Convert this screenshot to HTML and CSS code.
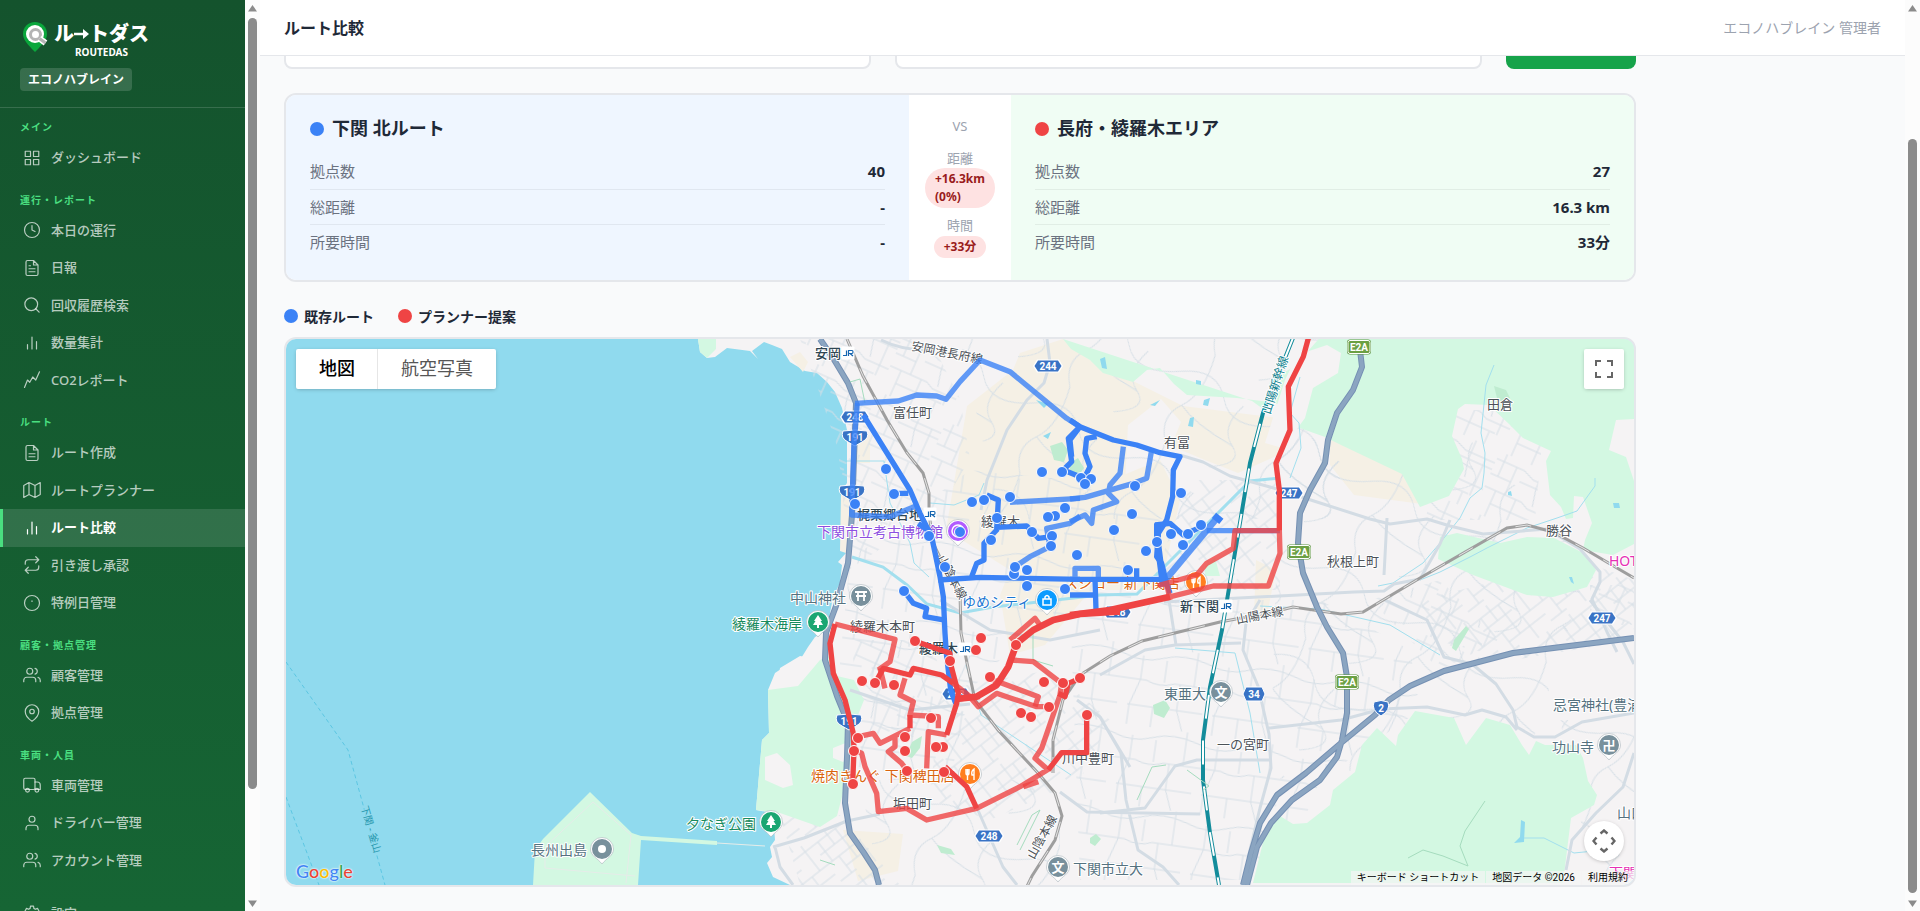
FILE: index.html
```html
<!DOCTYPE html>
<html lang="ja">
<head>
<meta charset="utf-8">
<title>ルート比較 | ルートダス</title>
<link rel="stylesheet" href="styles.css">
</head>
<body>
<div class="app">
  <aside class="sidebar">
    <div class="sidebar-scroll">
      <div class="brand">
        <div class="logo">
          <svg class="logo-pin" viewBox="0 0 26 32" aria-hidden="true">
            <path fill="#0aa73c" d="M13 1C6 1 1 6.200 1 13c0 5.500 4 10 12 18 8-8 12-12.500 12-18C25 6.200 20 1 13 1z"/>
            <circle cx="13" cy="13" r="9" fill="#fff"/>
            <circle cx="13.500" cy="13.500" r="5" fill="none" stroke="#b4b4b4" stroke-width="3"/>
            <path d="M17.500 17.500l6 4.500" stroke="#fff" stroke-width="6"/>
            <path d="M17.500 17.500l6 4.500" stroke="#b4b4b4" stroke-width="3"/>
          </svg>
          <div class="logo-text"><span class="logo-ja">ル<svg class="logo-arrow" viewBox="0 0 15 20" aria-hidden="true"><path d="M0 10h11" stroke="#fff" stroke-width="2.500"/><path d="M9 5l6 5-6 5z" fill="#fff"/></svg>トダス</span><span class="logo-en">ROUTEDAS</span></div>
        </div>
        <span class="tenant">エコノハブレイン</span>
      </div>
      <nav class="nav">
        <h2 class="nav-label nav-label-first">メイン</h2>
        <a class="nav-item" href="#"><svg class="icon" viewBox="0 0 24 24"><rect x="3" y="3" width="7" height="7"/><rect x="14" y="3" width="7" height="7"/><rect x="3" y="14" width="7" height="7"/><rect x="14" y="14" width="7" height="7"/></svg>ダッシュボード</a>
        <h2 class="nav-label">運行・レポート</h2>
        <a class="nav-item" href="#"><svg class="icon" viewBox="0 0 24 24"><circle cx="12" cy="12" r="10"/><path d="M12 6v6l4 2"/></svg>本日の運行</a>
        <a class="nav-item" href="#"><svg class="icon" viewBox="0 0 24 24"><path d="M14 2H6a2 2 0 0 0-2 2v16a2 2 0 0 0 2 2h12a2 2 0 0 0 2-2V8zM14 2v6h6M16 13H8M16 17H8M10 9H8"/></svg>日報</a>
        <a class="nav-item" href="#"><svg class="icon" viewBox="0 0 24 24"><circle cx="11" cy="11" r="8.500"/><path d="M21.500 21.500L17 17"/></svg>回収履歴検索</a>
        <a class="nav-item" href="#"><svg class="icon" viewBox="0 0 24 24"><path d="M18 20V10M12 20V4M6 20v-6"/></svg>数量集計</a>
        <a class="nav-item" href="#"><svg class="icon" viewBox="0 0 24 24"><path d="M2 22l4-10 3 3 4-7 4 4 5-11"/></svg>CO2レポート</a>
        <h2 class="nav-label">ルート</h2>
        <a class="nav-item" href="#"><svg class="icon" viewBox="0 0 24 24"><path d="M14 2H6a2 2 0 0 0-2 2v16a2 2 0 0 0 2 2h12a2 2 0 0 0 2-2V8zM14 2v6h6M16 13H8M16 17H8"/></svg>ルート作成</a>
        <a class="nav-item" href="#"><svg class="icon" viewBox="0 0 24 24"><path d="M1 6v16l7-4 8 4 7-4V2l-7 4-8-4zM8 2v16M16 6v16"/></svg>ルートプランナー</a>
        <a class="nav-item nav-item-active" href="#" aria-current="page"><svg class="icon" viewBox="0 0 24 24"><path d="M18 20V10M12 20V4M6 20v-6"/></svg>ルート比較</a>
        <a class="nav-item" href="#"><svg class="icon" viewBox="0 0 24 24"><path d="M17 1l4 4-4 4M3 11V9a4 4 0 0 1 4-4h14M7 23l-4-4 4-4M21 13v2a4 4 0 0 1-4 4H3"/></svg>引き渡し承認</a>
        <a class="nav-item" href="#"><svg class="icon" viewBox="0 0 24 24"><circle cx="12" cy="12" r="10"/><path d="M12 9v1"/></svg>特例日管理</a>
        <h2 class="nav-label">顧客・拠点管理</h2>
        <a class="nav-item" href="#"><svg class="icon" viewBox="0 0 24 24"><path d="M17 21v-2a4 4 0 0 0-4-4H5a4 4 0 0 0-4 4v2M23 21v-2a4 4 0 0 0-3-3.870M16 3.130a4 4 0 0 1 0 7.750"/><circle cx="9" cy="7" r="4"/></svg>顧客管理</a>
        <a class="nav-item" href="#"><svg class="icon" viewBox="0 0 24 24"><path d="M21 10c0 7-9 13-9 13s-9-6-9-13a9 9 0 0 1 18 0z"/><circle cx="12" cy="10" r="3"/></svg>拠点管理</a>
        <h2 class="nav-label">車両・人員</h2>
        <a class="nav-item" href="#"><svg class="icon" viewBox="0 0 24 24"><rect x="1" y="3" width="15" height="15" rx="2"/><path d="M16 8h3a4 4 0 0 1 4 4v6h-7"/><circle cx="6" cy="19" r="2.500"/><circle cx="18.500" cy="19" r="2.500"/></svg>車両管理</a>
        <a class="nav-item" href="#"><svg class="icon" viewBox="0 0 24 24"><path d="M20 21v-2a4 4 0 0 0-4-4H8a4 4 0 0 0-4 4v2"/><circle cx="12" cy="7" r="4"/></svg>ドライバー管理</a>
        <a class="nav-item" href="#"><svg class="icon" viewBox="0 0 24 24"><path d="M17 21v-2a4 4 0 0 0-4-4H5a4 4 0 0 0-4 4v2M23 21v-2a4 4 0 0 0-3-3.870M16 3.130a4 4 0 0 1 0 7.750"/><circle cx="9" cy="7" r="4"/></svg>アカウント管理</a>
        <a class="nav-item nav-item-last" href="#"><svg class="icon" viewBox="0 0 24 24"><circle cx="12" cy="12" r="3"/><path d="M9.500 4.500L10 1.500h4l.5 3 2 1.200 2.800-1.200 2 3.500-2.300 1.900v4.200l2.300 1.900-2 3.500-2.800-1.200-2 1.200-.5 3h-4l-.5-3-2-1.200-2.800 1.200-2-3.500L5 14.100V9.900L2.700 8l2-3.500 2.800 1.200z"/></svg>設定</a>
      </nav>
    </div>
    <div class="scrollbar" aria-hidden="true">
      <svg class="scroll-arrow" viewBox="0 0 9 7"><path d="M4.500 0L9 6.500H0z"/></svg>
      <div class="scroll-track scroll-track-side"><div class="scroll-thumb"></div></div>
      <svg class="scroll-arrow" viewBox="0 0 9 7"><path d="M4.500 7L0 .5h9z"/></svg>
    </div>
  </aside>

  <div class="main">
    <div class="main-column">
      <header class="topbar">
        <h1 class="page-title">ルート比較</h1>
        <span class="user">エコノハブレイン 管理者</span>
      </header>
      <main class="content">
        <form class="filters">
          <select class="route-select" aria-label="既存ルート"><option></option></select>
          <select class="route-select" aria-label="プランナー提案"><option></option></select>
          <button class="compare-button" type="button" aria-label="ルート比較"></button>
        </form>

        <section class="compare">
          <div class="panel panel-existing">
            <h2 class="panel-title"><span class="dot dot-blue"></span>下関 北ルート</h2>
            <dl class="stats">
              <div class="stat"><dt>拠点数</dt><dd>40</dd></div>
              <div class="stat"><dt>総距離</dt><dd>-</dd></div>
              <div class="stat"><dt>所要時間</dt><dd>-</dd></div>
            </dl>
          </div>
          <div class="versus">
            <div class="vs">VS</div>
            <div class="diff"><span class="diff-label">距離</span><span class="pill">+16.3km (0%)</span></div>
            <div class="diff"><span class="diff-label">時間</span><span class="pill">+33分</span></div>
          </div>
          <div class="panel panel-proposal">
            <h2 class="panel-title"><span class="dot dot-red"></span>長府・綾羅木エリア</h2>
            <dl class="stats">
              <div class="stat"><dt>拠点数</dt><dd>27</dd></div>
              <div class="stat"><dt>総距離</dt><dd>16.3 km</dd></div>
              <div class="stat"><dt>所要時間</dt><dd>33分</dd></div>
            </dl>
          </div>
        </section>

        <div class="legend">
          <span class="legend-item"><span class="dot dot-blue"></span>既存ルート</span>
          <span class="legend-item"><span class="dot dot-red"></span>プランナー提案</span>
        </div>

        <section class="map" aria-label="地図">
          <svg class="map-canvas" viewBox="286 339 1348 546" preserveAspectRatio="xMidYMid slice">
            <defs>
              <pattern id="st1" width="74" height="66" patternUnits="userSpaceOnUse" patternTransform="rotate(24)">
                <path class="street" d="M0 8h30l12 5h32M0 24h22M30 20h44M0 38h40l8 4h26M12 52h50M8 0v24M22 8v30M34 38v28M48 0v20l4 18M64 13v40M12 38v28M56 53v13"/>
              </pattern>
              <pattern id="st2" width="60" height="58" patternUnits="userSpaceOnUse" patternTransform="rotate(-38)">
                <path class="street" d="M0 7h60M0 19h36M0 31h60M14 43h46M0 52h20M6 7v24M18 0v19M28 7v36M40 31v27M50 0v31M14 31v21"/>
              </pattern>
              <pattern id="st3" width="86" height="80" patternUnits="userSpaceOnUse" patternTransform="rotate(8)">
                <path class="street" d="M0 10q20 8 40 0t46 0M0 34h26q14 6 28 0h32M10 60h50M20 10v24l-8 26v20M44 12v22M60 34v26l8 20M74 0v34M60 60h26M36 60v20"/>
              </pattern>
              <pattern id="st4" width="110" height="100" patternUnits="userSpaceOnUse" patternTransform="rotate(30)">
                <path class="street" d="M0 30q30-20 50 4t60-4M20 0q10 40-4 60t4 40M70 30q-10 30 10 40t-10 30M16 60q20 10 64 10"/>
              </pattern>
              <g id="hex"><path d="M-11-6.500h22l4 6.500-4 6.500h-22L-15 0z" fill="#fff"/><path d="M-10-5.500h20l3.500 5.500-3.500 5.500h-20L-13.500 0z" fill="#3973c5"/></g>
              <g id="nat"><path d="M-12-7Q0-9 12-7q3 7-5 11l-7 4-7-4Q-15 0-12-7z" fill="#3973c5" stroke="#fff" stroke-width="1"/></g>
              <g id="exp"><rect x="-12" y="-7.500" width="24" height="15" rx="3" fill="#5d9540"/><rect x="-11" y="-6.500" width="22" height="13" rx="2" fill="#6ba043" stroke="#fff" stroke-width="1"/></g>
              <g id="pin"><path d="M-11.500 0a11.500 11.500 0 1 1 23 0c0 7-7 9-11.500 15C-4.500 9-11.500 7-11.500 0z" fill="#fff" stroke="#a9b4ba" stroke-width=".6"/><circle r="10" fill="currentColor"/></g>
              <g id="tree"><use href="#pin"/><path d="M0-7l4 6H2.500L5 3H1v3h-2V3h-4l2.500-4H-4z" fill="#fff"/></g>
              <g id="food"><use href="#pin"/><path d="M-4-5v4q0 2 1.500 2T-1-1v-4M-2.500-5v11M4 6V-5Q1-3 2 1h2" fill="none" stroke="#fff" stroke-width="1.400"/></g>
              <g id="jr"><rect x="-6.500" y="-6.500" width="13" height="13" rx="1" fill="#fff"/><path d="M-5 2.500h3.500V-2.500M.5 3v-5.500h3.500q1 0 1 1.500t-1 1.500H2l3 2.500" fill="none" stroke="#1565b0" stroke-width="1.200"/></g>
              <circle id="b" r="5.500" fill="#3b82f6" stroke="#fff" stroke-width="1"/>
              <circle id="r" r="5.500" fill="#ef4444" stroke="#fff" stroke-width="1"/>
              <g id="rails">
                <path d="M847 339l16 37 24 44 20 33 16 20 6 20v20l4 30 13 27 14 23 1 40 6 30 8 37 23 30 40 43 17 20 7 23-7 24-23 36-14 29"/>
                <path d="M1053 773v-33l10-40 17-25 30-19 32-15 78-19 53-10 20-5 48 7 22-2 57-34 87-50 20-3 26 7 30 16 51 30"/>
              </g>
              <g id="highways">
                <path d="M820 339l13 19 15 25 8 20-1 27-3 85-4 48-12 43-10 27-1 27 12 36 11 27-1 34-2 46 5 30 14 20 11 17 4 15"/>
                <path d="M1360 350l2 17-9 23-16 23-9 27-3 23-15 27-10 23-2 30 5 30 14 34 10 20 16 26 4 24v36l-5 27-5 17-17 23-28 20-21 23-14 24-10 38M1634 638l-121 15-69 18-34 15-21 14-14 15-34 28-35 30-29 22-17 28-9 30-8 32"/>
              </g>
            </defs>

            <rect x="286" y="339" width="1348" height="546" fill="#90daee"/>
            <!-- coastline and island -->
            <path fill="#f5f3f4" d="M698 339l2 13 7 6 8-1 12-9 23 3 8 8-6-8 12-9 8 3 10 4 8 13 15 9 12 2 10 9 8 10 7 16 5 22v53l-5 7 1 27-2 26 5 10-8 9 4 3-2 18-7 14-3 16-3 17-12 7-7 10-8 13-13 5-12 8-7 17 1 43-7 7-6 70 17 3 2 27-5 7 2 10-5 6 6 14 17 8h844V339z"/>
            <path fill="#d3f8e2" d="M543 839l47-47 42 41 9 3 76 5v4l-76-5-3 45H533l2-35zM698 339h18v10l-9 9-7-6z"/>
            <path fill="none" stroke="#e6ece9" d="M545 847l48-45 38 33-5 48M545 868l90 8M545 850v18M717 843l48 3"/>
            <!-- farmland -->
            <g fill="#f5f0e5">
              <path d="M967 406l46-36 7-17 43-14 17 14 25 17 28 11 50 25 104 13-4 34-45 20-33-13-34-14 10-24-20-23-33 26-3 60-35 20 5 80-50 60-35 10-10-60 10-25-64-40z"/>
              <path d="M1070 497l90-37 20 40-20 90-90 0zM1330 438l40 4 32 30 20 32-68-9-24-30zM841 492l10 3 1 60-12-4zM843 830l60 4-5 37-40 10zM790 357l10-5 8 10-5 10zM852 435h18v28h-16zM1256 560l20 10-10 50-12-5z"/>
            </g>
            <!-- minor streets -->
            <path fill="url(#st1)" d="M800 339h130l30 60 10 60-30 50-90 60-12-120-20-60z"/>
            <path fill="url(#st4)" d="M960 339h380v180h-340z"/>
            <path fill="url(#st3)" d="M850 560l120-90 100 10 90 40-30 80-100 30-60 60-20 90-110 0 0-120zM1070 600h250l90 50 10 60-100 70-40 100h-200z"/>
            <path fill="url(#st2)" d="M940 690l110-20 60 50-30 60-90 40-60-20zM1190 480h90v110h-130zM780 815h60l60 70H800zM1420 600l160-40 54 20v60l-120 20-80-20z"/>
            <path fill="url(#st1)" d="M1455 410h90l-10 110h-110zM1370 600l70-20 60 60-60 30zM1610 420h24v34h-24zM1590 585h44v40h-44z"/>
            <path fill="url(#st4)" d="M1280 440l180-10 130 130-60 190-260 30zM860 780h200v105H880zM1560 720h74v165h-40z"/>
            <path fill="url(#st1)" d="M850 640h80l20 60-60 60-30-60z"/>
            <!-- hills and parks -->
            <g fill="#d3f8e2">
              <path d="M1063 339l8 10 19 11 13 13 30 9 14-12 13-2 14 16 13 11 50 3 33 4 17 5 7-40 30-34h310v211l-21 11-30-5 2-10 7-17-9-26-9-1-1 22-7 1-5-12-11-12-4-34 5-10-28-13-14-14-20-19-24-1-7 5-6 27 10 23 2 10-15 27-29 11-18-33-63-30-14-7-28-10 3-40 12-17-12-7-30 18-4 30-14-10z"/>
              <path d="M1440 537l17-4 43 10 27-6 27 1 33 17 9 15-9 17-34 10-26-2-54-20-35-16zM1205 566l10-8 5 18h-15z"/>
            </g>
            <path fill="#f5f3f4" d="M1285 380l12-25 30-10 14 8-3 20-25 15-8 30-22 30-18-5z"/>
            <path fill="#f5f3f4" d="M1616 420l18-1v62l-8-24-17-7z"/>
            <path fill="#d3f8e2" d="M1266 830l14-14 13 8 14-1 23-18 3-15 22-18 7-27 15-17 19 18 2-11 17-24 39 7 12 27 20-27 24 7 12 20 7 10 7-14 9 4 31 0 7 13 5 23 9 14-3 10-23 13-8 65h-310z"/>
            <path fill="#d3f8e2" d="M768 690l30-4 22-26 12-5 5 21 17 4 10 20-12 30-2 36-13 50-17 11-40-14-24-3 6-70 7-7z"/>
            <path fill="#f5f3f4" d="M765 757l12-4 13 12 3 20-10 3-18-8zM833 748l15-6 5 10-10 10-10-4zM780 668l20-12 12 2-15 18-20 12z"/>
            <g fill="#bfecd0"><path d="M1050 446l12-4 6 8-4 12-10-2zM1070 463l8-5 6 10-7 10-7-5zM912 742l10-6-2 12-8 10-6-2zM937 845l14 4 4 6-14-2zM1153 705l12-5 5 8-6 10-10-4zM1454 640l12-14 3 3-13 22-4-3zM1494 386l12 4 4 8-12 4zM1090 838l6-4 5 5-6 7-5-3z"/></g>
            <g fill="#90daee"><path d="M1100 359l5-2 2 12-5-1zM1196 380l5 1 0 4-5-1zM1204 400l6-2-2 8-5-1zM1190 418l4-1-1 10-5-1zM1150 405l10-5-5 6zM1036 400l12 4-4 4zM1043 436l8-4-3 7zM1508 492l3-1 1 5-4-1zM1613 503l6 0 1 5-6 0zM1569 577l3 0 2 7-3-2zM1521 820l4 2-1 20-10 1 6-6z"/></g>
            <!-- rivers -->
            <g class="river">
              <path d="M852 557l31 10 24 18 20 19 33 9 33-6 107-12 37-1 30-30 50-50 33-33 30-3" stroke-width="3"/>
              <path d="M847 461h37l6 42 20 40 4 20 15 14M930 503l24 2 25-10 5-12M1290 478l11-30-2-25-9-10 10-36M1494 365l-8 20-5 48 4 20-1 20-2 15-12 10-10 20-20 25-17 20-30 20-15 3M1595 478v8l-18 25-20 7-30 10-40 20-17 9-30 15-20 8M966 665l15 50 90 60M1175 648l60 5 15 60 10 60M1260 606l60 3 70 16 50 30M1524 838l20 0 30 15 40-4"/>
              <path d="M286 662l62 88 37 135M286 797l33 88" stroke="#5cc6e2" stroke-dasharray="4 3"/>
            </g>
            <!-- arterial roads -->
            <g class="road">
              <path d="M881 340q20 10 45 10M1047 339l3 24-6 20-17 17-20 30-20 50-6 30M1180 455l23 7 27 14 40 11 47 15 53 17 20 5 37-5 23 7 33 8 27-2 37-3 33 20 20 23v10l-8 17 15 33 10 20M1260 600l-14 23-3 27 15 36 11 48 2 34-11 40-12 50"/>
              <path d="M1590 600l33 42 11 22M1450 520l-10 24-20 35-26 5-10 7-30 1-190 10M1384 575l3-57M1385 600l42 20 17 37 28 7 24 20 17 26 4 17 17 10 21 0 27-15 52-9M1269 728l72-8 41-11 45-2 38 8 17-5 24 7 11 13M1100 813l45-5 30-42 22-6h73M1100 675l45-25 30-5 66-2M1169 600l7 45M1634 753l-11 34-27 26-24 27-6 30M773 847l31-9 43-17 33-7M775 847l5 20 13 18M977 808l26 59 14 18M1077 700l23 17 30 50M1060 792l27 20 113 2M1100 717l21 36 5 47 12 50 25 17 16 18M940 600l50 30 60 10 50-10M850 690l60 20 60-6"/>
            </g>
            <!-- railways -->
            <use href="#rails" class="rail"/>
            <use href="#rails" class="rail-dash"/>
            <!-- national road and expressway -->
            <use href="#highways" class="highway-edge"/>
            <use href="#highways" class="highway"/>
            <path fill="none" stroke="#138c9b" stroke-width="4" d="M1293 338l-30 75-13 50-28 167-12 57-7 53v40l7 53 9 52"/>
            <path fill="none" stroke="#fff" stroke-width="2" stroke-dasharray="24 22" d="M1293 338l-30 75-13 50-28 167-12 57-7 53v40l7 53 9 52"/>
            <g fill="none" stroke="#a5dcbe" stroke-width="1"><path d="M850 382l10-3 5 24M1033 630v30l20 6M1137 800l15-33 14-2M1187 770l22 16-6 4M1020 850l20-40-8 5-15 30M1408 858l15-8 20 6 25 10-8-20 5-15 20-30M820 860l15 5"/></g>

            <!-- place names, drawn below the routes -->
            <g class="lb">
              <text x="815" y="358" class="st">安岡</text><use href="#jr" x="848" y="353"/>
              <text transform="translate(911 350) rotate(11)" class="rd">安岡港長府線</text>
              <text x="893" y="417">富任町</text>
              <text x="857" y="519" class="st">梶栗郷台地</text><use href="#jr" x="930" y="514"/>
              <text x="817" y="537" class="poi purple">下関市立考古博物館</text>
              <text x="981" y="526">綾羅木</text>
              <text x="790" y="603" class="poi slate">中山神社</text>
              <text x="732" y="629" class="poi green">綾羅木海岸</text>
              <text x="850" y="631">綾羅木本町</text>
              <text x="919" y="653" class="st">綾羅木</text><use href="#jr" x="965" y="649"/>
              <text x="962" y="607" class="poi blue">ゆめシティ</text>
              <text x="1064" y="588" class="poi orange">スシロー 新下関店</text>
              <text x="1180" y="611" class="st">新下関</text><use href="#jr" x="1226" y="606"/>
              <text transform="translate(1237 624) rotate(-11)" class="rd">山陽本線</text>
              <text transform="translate(937 558) rotate(62)" class="rd">山陰本線</text>
              <text transform="translate(1270 415) rotate(-72)" class="rd teal">山陽新幹線</text>
              <text x="1164" y="447">有冨</text>
              <text x="1487" y="409">田倉</text>
              <text x="1546" y="535">勝谷</text>
              <text x="1327" y="566">秋根上町</text>
              <text x="1609" y="566" class="poi pink">HOTEL</text>
              <text x="1164" y="699" class="poi slate">東亜大</text>
              <text x="1217" y="749">一の宮町</text>
              <text x="1553" y="710" class="poi slate">忌宮神社(豊浦)</text>
              <text x="1552" y="752" class="poi slate">功山寺</text>
              <text x="1617" y="818" class="poi slate">山口</text>
              <text x="1609" y="878" class="poi pink">下関</text>
              <text x="1073" y="874" class="poi slate">下関市立大</text>
              <text x="1062" y="763">川中豊町</text>
              <text x="893" y="808">垢田町</text>
              <text x="811" y="781" class="poi orange">焼肉きんぐ 下関稗田店</text>
              <text x="686" y="829" class="poi green">夕なぎ公園</text>
              <text x="531" y="855" class="poi slate">長州出島</text>
              <text transform="translate(1034 860) rotate(-61)" class="rd">山陰本線</text>
              <text transform="translate(361 807) rotate(74)" class="ferry">下関 - 釜山</text>
            </g>
            <g color="#78909c">
              <use href="#pin" x="861" y="596"/><path d="M855 592h12M856 596h10M858 592v9M864 592v9" stroke="#fff" stroke-width="1.800"/>
              <use href="#pin" x="1221" y="692"/><use href="#pin" x="1609" y="745"/><use href="#pin" x="1058" y="867"/>
              <use href="#pin" x="602" y="849"/><circle cx="602" cy="849" r="4" fill="#fff"/>
              <text class="glyph" x="1221" y="697">文</text><text class="glyph" x="1058" y="872">文</text><text class="glyph" x="1609" y="750">卍</text>
            </g>
            <g color="#1ba672"><use href="#tree" x="818" y="622"/><use href="#tree" x="771" y="822"/></g>
            <g color="#ff7f1f"><use href="#food" x="970" y="774"/><use href="#food" x="1196" y="582"/></g>
            <g color="#0a9bff"><use href="#pin" x="1047" y="600"/><path d="M1043 599h8v6h-8zM1045 599v-2q2-3 4 0v2" fill="none" stroke="#fff" stroke-width="1.500"/></g>
            <g color="#b15cff"><use href="#pin" x="958" y="531"/><circle cx="958" cy="531" r="6" fill="none" stroke="#fff" stroke-width="1.500"/></g>
            <g class="shield">
              <use href="#hex" x="1048" y="366"/><text x="1048" y="370">244</text>
              <use href="#hex" x="855" y="417"/><text x="855" y="421">248</text>
              <use href="#nat" x="855" y="438"/><text x="855" y="441">191</text>
              <use href="#nat" x="852" y="493"/><text x="852" y="496">191</text>
              <use href="#hex" x="1289" y="493"/><text x="1289" y="497">247</text>
              <use href="#hex" x="956" y="694"/><text x="956" y="698">248</text>
              <use href="#nat" x="849" y="722"/><text x="849" y="725">191</text>
              <use href="#hex" x="989" y="836"/><text x="989" y="840">248</text>
              <use href="#hex" x="1117" y="612"/><text x="1117" y="616">248</text>
              <use href="#hex" x="1602" y="618"/><text x="1602" y="622">247</text>
              <path d="M1246 687h16l3 7-3 7h-16l-3-7z" fill="#3973c5" stroke="#fff"/><text x="1254" y="698">34</text>
              <path d="M1374 702q7-3 14 0 3 8-7 14-10-6-7-14z" fill="#3973c5" stroke="#fff"/><text x="1381" y="712">2</text>
              <use href="#exp" x="1359" y="347"/><text x="1359" y="351">E2A</text>
              <use href="#exp" x="1299" y="552"/><text x="1299" y="556">E2A</text>
              <use href="#exp" x="1347" y="682"/><text x="1347" y="686">E2A</text>
            </g>

            <!-- existing route -->
            <g class="route route-blue">
              <g transform="translate(780 330) scale(.33333)">
                <path d="M225 220l130-7 55-18 60 3 28 10 42-53 60-65 90 35 170 140 40 25"/>
                <path d="M232 220l-10 120-7 215 115 5 85-35"/>
                <path class="strong" d="M250 255l140 225 30 70 35 70 25 120 10 60 5 110 4 60 13 110 15 40"/>
                <path class="strong" d="M475 750l125-8 300 6M342 490h43M372 783l28 37 40 15-5 25 55 10M575 740l15-40 22-10v-50l38-40 5-90-35-15M650 592l90-4 17 17 18 20 40-5"/>
                <path d="M690 517l210-12M900 558l-30 22-70 15 10 55-60 30-45 30"/>
                <path class="strong" d="M900 290l-35 35 10 70-25 25 50 20M415 580l40 30"/>
              </g>
              <g transform="translate(1070 330) scale(.33333)">
                <path class="strong" d="M0 270l30 20 100 40 70 15 70 23 60 12-20 40-2 80-18 70-25 40-5 70 15 20 15 60 10 30"/>
                <path d="M0 507l45-5 145-42 40-15 15-85M0 575l45-20 20 25 5-40 70-25-25-25 5-25 30-35 10-80M15 740v-25h70v30M630 602H410"/>
                <path class="strong" d="M0 748h270M0 795h70M200 715v30M75 745l3 95M255 585l45-5 40 35 55-25M80 320l-30 5-5 45 15 40-20 40M30 290L0 330l5 50"/>
                <path class="wide" d="M440 565L290 745"/>
                <path class="wide strong" d="M262 580l0 50 18 140M432 556l22 18"/>
              </g>
            </g>
            <!-- proposed route -->
            <g class="route route-red">
              <g transform="translate(1070 330) scale(.33333)">
                <path class="strong" d="M715 25l-15 55-45 90 5 130-42 100 10 80v122"/>
                <path d="M628 602l2 68-35 98H430l-140 35M630 602H495l-5 53-80 45-30 35-110 30 20-5 10 50"/>
                <path class="strong wide" d="M300 800l-180 40-120 15"/>
              </g>
              <g transform="translate(720 600) scale(.33333)">
                <path class="strong wide" d="M1200 35h-10l-110 7-80 18-60 30-50 40-25 70-35 55-60 35-60 7"/>
                <path d="M870 120l75-65 15 20M345 72l180 46-15 67-35 25M400 450l25 10 10 40 35 80 5 55 85-10 60 35 150-35 130-65 90-55M875 180l65 5 85 65-5 35-55 160-20 30 40 35M820 240l135 50-10 30"/>
                <path class="strong" d="M345 72l-15 58 10 90 35 80 25 100 2 50-4 100M590 125l100 35v25l25 95-5 30-30 95M465 250l25-45 80 20 10-20 85 20 35 25M675 500l65 60 30 65M985 510l40-52h75V345M1080 235l-35 15-10 40-20-10M570 345v40"/>
                <path d="M680 405l-55-10-5 110M700 250l45 35 30 35 55-40 30 10 90 30h35M555 235l-15 50 40 20-10 40 85 5v35M570 385l-90 45-20-30-45 10M525 410v30l-20 15 40 35 15 20M910 560l45-15M480 205l15 60M780 290l-70 7"/>
              </g>
            </g>
            <!-- stops -->
            <g>
              <use href="#b" x="886" y="469"/><use href="#b" x="894" y="494"/><use href="#b" x="855" y="504"/><use href="#b" x="929" y="536"/><use href="#b" x="960" y="532"/><use href="#b" x="945" y="567"/><use href="#b" x="904" y="591"/><use href="#b" x="972" y="502"/><use href="#b" x="984" y="500"/><use href="#b" x="1010" y="497"/><use href="#b" x="997" y="518"/><use href="#b" x="991" y="540"/><use href="#b" x="1032" y="532"/><use href="#b" x="1055" y="516"/><use href="#b" x="1048" y="517"/><use href="#b" x="1065" y="508"/><use href="#b" x="1052" y="536"/><use href="#b" x="1051" y="546"/><use href="#b" x="1014" y="574"/><use href="#b" x="1015" y="567"/><use href="#b" x="1027" y="570"/><use href="#b" x="1027" y="586"/><use href="#b" x="1065" y="589"/><use href="#b" x="1042" y="472"/><use href="#b" x="1062" y="472"/><use href="#b" x="1077" y="555"/><use href="#b" x="1081" y="478"/><use href="#b" x="1091" y="479"/><use href="#b" x="1085" y="484"/><use href="#b" x="1135" y="486"/><use href="#b" x="1181" y="493"/><use href="#b" x="1132" y="514"/><use href="#b" x="1114" y="530"/><use href="#b" x="1171" y="534"/><use href="#b" x="1188" y="534"/><use href="#b" x="1183" y="545"/><use href="#b" x="1201" y="525"/><use href="#b" x="1157" y="542"/><use href="#b" x="1146" y="551"/><use href="#b" x="1128" y="570"/>
              <use href="#r" x="915" y="641"/><use href="#r" x="981" y="638"/><use href="#r" x="976" y="650"/><use href="#r" x="950" y="661"/><use href="#r" x="1016" y="645"/><use href="#r" x="862" y="681"/><use href="#r" x="875" y="683"/><use href="#r" x="894" y="685"/><use href="#r" x="990" y="677"/><use href="#r" x="1044" y="682"/><use href="#r" x="1063" y="683"/><use href="#r" x="1080" y="678"/><use href="#r" x="1049" y="707"/><use href="#r" x="1021" y="713"/><use href="#r" x="1031" y="717"/><use href="#r" x="1087" y="715"/><use href="#r" x="931" y="718"/><use href="#r" x="858" y="738"/><use href="#r" x="854" y="751"/><use href="#r" x="853" y="784"/><use href="#r" x="905" y="737"/><use href="#r" x="905" y="751"/><use href="#r" x="943" y="747"/><use href="#r" x="936" y="747"/><use href="#r" x="907" y="771"/><use href="#r" x="944" y="772"/>
            </g>
          </svg>

          <div class="map-types">
            <button class="map-type map-type-active" type="button">地図</button>
            <button class="map-type" type="button">航空写真</button>
          </div>
          <button class="map-fullscreen" type="button" aria-label="全画面表示">
            <svg viewBox="0 0 18 18" width="18" height="18"><path d="M0 0v6h2V2h4V0zM16 0h-4v2h4v4h2V0zM16 16h-4v2h6v-6h-2zM2 12H0v6h6v-2H2z" fill="#666"/></svg>
          </button>
          <button class="map-camera" type="button" aria-label="カメラ操作">
            <svg viewBox="0 0 24 24" width="24" height="24"><path d="M8.500 4.500L12 1.500l3.500 3M8.500 19.500l3.500 3 3.500-3M4.500 8.500L1.500 12l3 3.500M19.500 8.500l3 3.500-3 3.500" fill="none" stroke="#666" stroke-width="2.400"/></svg>
          </button>
          <div class="google" aria-label="Google"><span class="g-blue">G</span><span class="g-red">o</span><span class="g-yellow">o</span><span class="g-blue">g</span><span class="g-green">l</span><span class="g-red">e</span></div>
          <div class="map-terms">
            <button class="term" type="button">キーボード ショートカット</button>
            <span class="term">地図データ ©2026</span>
            <a class="term" href="#">利用規約</a>
          </div>
        </section>
      </main>
    </div>
    <div class="scrollbar" aria-hidden="true">
      <svg class="scroll-arrow" viewBox="0 0 9 7"><path d="M4.500 0L9 6.500H0z"/></svg>
      <div class="scroll-track scroll-track-main"><div class="scroll-thumb"></div></div>
      <svg class="scroll-arrow" viewBox="0 0 9 7"><path d="M4.500 7L0 .5h9z"/></svg>
    </div>
  </div>
</div>
</body>
</html>
```

FILE: styles.css
```css
* { box-sizing: border-box; }

body {
  margin: 0;
  font-family: "Noto Sans", "Noto Sans CJK JP", sans-serif;
  font-size: 14px;
  line-height: 1.5;
  color: #1f2937;
  background: #f9fafb;
}

h1, h2, dl, dd { margin: 0; }
button, select { font: inherit; }

.app {
  display: flex;
  height: 100vh;
  overflow: hidden;
}

/* Sidebar */
.sidebar {
  display: flex;
  flex: 0 0 260px;
  background: linear-gradient(#14532d, #166534);
}
.sidebar-scroll {
  flex: 1;
  overflow: hidden;
}
.brand {
  height: 108px;
  padding: 20px 20px 16px;
  border-bottom: 1px solid rgba(255, 255, 255, .15);
}
.logo {
  display: flex;
  gap: 6px;
  height: 36px;
  margin-bottom: 12px;
  padding-left: 2px;
}
.logo-pin { width: 26px; height: 32px; margin-top: 1px; }
.logo-text {
  display: flex;
  flex-direction: column;
  align-items: center;
  color: #fff;
  font-weight: 700;
}
.logo-ja {
  display: flex;
  align-items: center;
  font-size: 20px;
  font-weight: 900;
  line-height: 28px;
}
.logo-arrow { width: 15px; height: 20px; }
.logo-en { font: 700 10px/8px "Noto Sans", sans-serif; }
.tenant {
  display: inline-block;
  padding: 0 8px;
  border-radius: 4px;
  background: rgba(255, 255, 255, .15);
  color: #fff;
  font-size: 12px;
  font-weight: 700;
  line-height: 23px;
}
.nav-label {
  padding: 16px 20px 4px;
  color: #4ade80;
  font-size: 10px;
  font-weight: 700;
  letter-spacing: 1px;
}
.nav-label-first { padding-top: 12px; }
.nav-item {
  display: flex;
  align-items: center;
  gap: 10px;
  padding: 9px 20px;
  border-left: 3px solid transparent;
  color: rgba(255, 255, 255, .7);
  font-size: 13px;
  font-weight: 500;
  text-decoration: none;
  white-space: nowrap;
}
.nav-item-active {
  border-left-color: #4ade80;
  background: rgba(255, 255, 255, .12);
  color: #fff;
  font-weight: 700;
}
.nav-item-last { margin-top: 16px; }
.icon {
  flex: none;
  width: 18px;
  height: 18px;
  fill: none;
  stroke: currentColor;
  stroke-width: 1.6;
  stroke-linecap: round;
  stroke-linejoin: round;
}

/* Scrollbars */
.scrollbar {
  display: flex;
  flex-direction: column;
  align-items: center;
  flex: 0 0 15px;
  padding: 5px 0 4px;
  background: #fcfcfc;
}
.scroll-arrow { flex: none; width: 9px; height: 7px; fill: #8b8b8b; }
.scroll-track { flex: 1; width: 9px; }
.scroll-track-side { padding: 6px 0 111px; }
.scroll-track-main { padding: 127px 0 7px; }
.scroll-thumb { height: 100%; border-radius: 5px; background: #8b8b8b; }

/* Main area */
.main { display: flex; flex: 1; min-width: 0; }
.main-column { flex: 1; min-width: 0; overflow: hidden; }
.topbar {
  position: relative;
  z-index: 1;
  display: flex;
  align-items: center;
  justify-content: space-between;
  height: 56px;
  padding: 0 24px;
  border-bottom: 1px solid #e5e7eb;
  background: #fff;
}
.page-title { font-size: 16px; font-weight: 700; }
.user { color: #9ca3af; }
.content {
  max-width: 1400px;
  margin-top: -31px;
  padding: 0 24px 24px;
}
.filters {
  display: grid;
  grid-template-columns: 1fr 1fr 130px;
  gap: 24px;
  margin-bottom: 24px;
}
.route-select {
  height: 44px;
  border: 2px solid #e5e7eb;
  border-radius: 8px;
  background: #fff;
  appearance: none;
}
.compare-button {
  border: 0;
  border-radius: 8px;
  background: #16a34a;
}

.compare {
  display: grid;
  grid-template-columns: 1fr 102px 1fr;
  overflow: hidden;
  border: 2px solid #e5e7eb;
  border-radius: 12px;
  background: #fff;
}
.panel { padding: 20px 24px; }
.panel-existing { background: #eff6ff; }
.panel-proposal { background: #f0fdf4; }
.panel-title {
  display: flex;
  align-items: center;
  gap: 8px;
  margin-bottom: 12px;
  font-size: 18px;
  line-height: 27px;
  font-weight: 700;
}
.dot { flex: none; width: 14px; height: 14px; border-radius: 50%; }
.dot-blue { background: #3b82f6; }
.dot-red { background: #ef4444; }
.stat {
  display: flex;
  justify-content: space-between;
  padding: 6px 0;
  border-bottom: 1px solid rgba(0, 0, 0, .06);
  font-size: 15px;
}
.stat:last-child { border-bottom: 0; }
.stat dt { color: #6b7280; }
.stat dd { font-weight: 700; }
.versus {
  display: flex;
  flex-direction: column;
  align-items: center;
  justify-content: center;
  gap: 8px;
  padding: 0 16px;
}
.vs { margin-bottom: 4px; color: #9ca3af; font-size: 13px; }
.diff { display: flex; flex-direction: column; align-items: center; }
.diff-label { color: #9ca3af; font-size: 13px; }
.pill {
  padding: 2px 10px;
  border-radius: 20px;
  background: #fee2e2;
  color: #991b1b;
  font-size: 12px;
  font-weight: 700;
}

.legend { display: flex; gap: 24px; margin: 24px 0 10px; }
.legend-item {
  display: flex;
  align-items: center;
  gap: 6px;
  font-weight: 700;
}

/* Map */
.map {
  position: relative;
  overflow: hidden;
  border: 2px solid #e5e7eb;
  border-radius: 12px;
}
.map-canvas { display: block; width: 100%; height: 546px; }
.street { fill: none; stroke: #d6dfe6; stroke-width: 1; }
.river { fill: none; stroke: #a2dfee; stroke-width: 1; }
.road { fill: none; stroke: #d3dce4; stroke-width: 3; stroke-linejoin: round; }
.rail { fill: none; stroke: #9e9e9e; stroke-width: 3; }
.rail-dash { fill: none; stroke: #e4e4e4; stroke-width: 1; stroke-dasharray: 16 16; }
.highway-edge { fill: none; stroke: #7590b3; stroke-width: 6; stroke-linejoin: round; }
.highway { fill: none; stroke: #8ba5c1; stroke-width: 4; stroke-linejoin: round; }
.route { fill: none; stroke-width: 16; stroke-linejoin: round; }
.route path { opacity: .8; }
.route .strong { opacity: 1; }
.route .wide { stroke-width: 20; }
.route-blue { stroke: #3b82f6; }
.route-red { stroke: #ef4444; }

.lb text {
  fill: #4b5157;
  stroke: #fff;
  stroke-width: 2px;
  stroke-linejoin: round;
  paint-order: stroke;
  font-family: "Noto Sans", "Noto Sans CJK JP", sans-serif;
  font-size: 13px;
}
.lb .st { fill: #2f4652; font-weight: 500; }
.lb .rd { font-size: 12px; }
.lb .poi { font-size: 14px; }
.lb .purple { fill: #8e4fe0; }
.lb .slate { fill: #55727f; }
.lb .green { fill: #178a5e; }
.lb .blue { fill: #1976d2; }
.lb .orange { fill: #d9640d; }
.lb .pink { fill: #e62fb4; }
.lb .teal { fill: #0d7f8e; }
.lb .ferry { fill: #2596ad; stroke: #90daee; font-size: 10px; }
.glyph {
  fill: #fff;
  font: 700 13px "Noto Sans CJK JP", sans-serif;
  text-anchor: middle;
}
.shield text {
  fill: #fff;
  font: 700 10px Roboto, sans-serif;
  text-anchor: middle;
}

.map-types {
  position: absolute;
  top: 10px;
  left: 10px;
  display: flex;
  border-radius: 2px;
  background: #fff;
  box-shadow: 0 1px 4px -1px rgba(0, 0, 0, .3);
}
.map-type {
  height: 40px;
  padding: 0 23px;
  border: 0;
  background: none;
  color: #565656;
  font-size: 18px;
}
.map-type-active {
  padding-right: 22px;
  border-right: 1px solid #e6e6e6;
  color: #000;
  font-weight: 500;
}
.map-fullscreen,
.map-camera {
  position: absolute;
  right: 10px;
  display: flex;
  align-items: center;
  justify-content: center;
  width: 40px;
  height: 40px;
  padding: 0;
  border: 0;
  border-radius: 2px;
  background: #fff;
  box-shadow: 0 1px 4px -1px rgba(0, 0, 0, .3);
}
.map-fullscreen { top: 10px; }
.map-camera { bottom: 24px; border-radius: 50%; }
.google {
  position: absolute;
  left: 10px;
  bottom: 2px;
  font: 500 18px/24px Lato, sans-serif;
  text-shadow: 0 0 2px #fff, 0 0 2px #fff;
}
.g-blue { color: #4285f4; }
.g-red { color: #ea4335; }
.g-yellow { color: #fbbc04; }
.g-green { color: #34a853; }
.map-terms {
  position: absolute;
  right: 0;
  bottom: 0;
  display: flex;
  gap: 1px;
}
.term {
  padding: 0 6px;
  border: 0;
  background: rgba(245, 245, 245, .7);
  color: #000;
  font: 10px/14px Roboto, "Noto Sans CJK JP", sans-serif;
  text-decoration: none;
}
```
